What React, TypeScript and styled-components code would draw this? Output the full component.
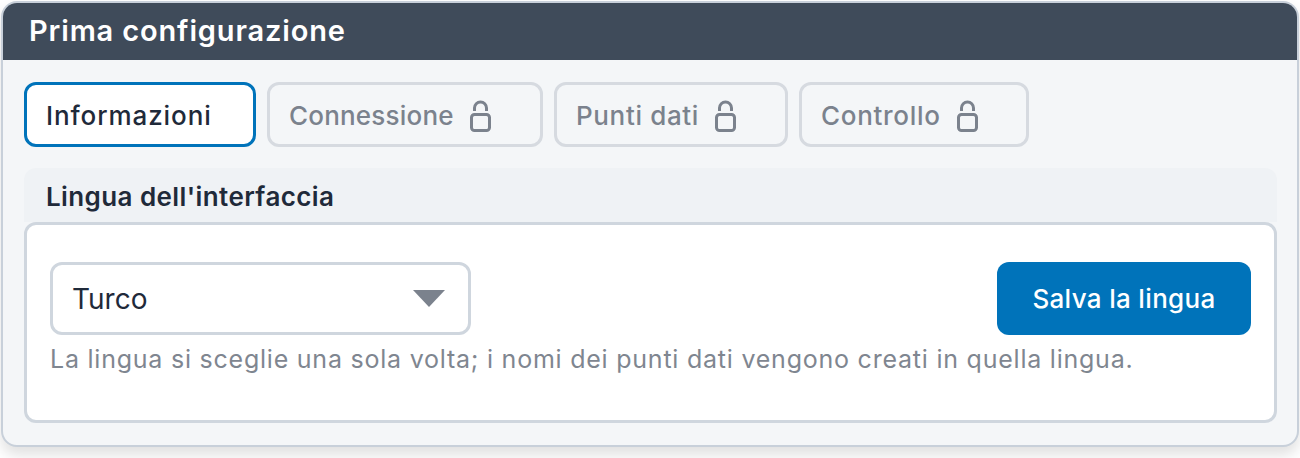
import React from "react";
import styled, { createGlobalStyle } from "styled-components";

const Global = createGlobalStyle`
  html, body { margin: 0; padding: 0; background: #ffffff; }
  body { font-family: "Inter", "Noto Sans", sans-serif; }
  * { box-sizing: border-box; }
`;

const Page = styled.div`
  width: 1300px;
  height: 458px;
  padding: 1px 1px 0 1px;
  overflow: hidden;
`;

const Card = styled.div`
  width: 1298px;
  height: 446px;
  border: 2px solid #c8d0da;
  border-radius: 16px;
  background: #f4f6f8;
  box-shadow: 0 8px 14px rgba(0, 0, 0, 0.12);
  overflow: hidden;
`;

const Header = styled.div`
  height: 57px;
  background: #3f4b5a;
  color: #ffffff;
  display: flex;
  align-items: center;
  padding: 0 26px 2px 26px;
  font-size: 29px;
  font-weight: 600;
  letter-spacing: 0.85px;
`;

const Body = styled.div`
  padding: 22px 20px 0 21px;
`;

const Tabs = styled.div`
  display: flex;
  gap: 11px;
`;

const Tab = styled.div<{ $active?: boolean; $width: number; $tracking: number }>`
  width: ${(p) => p.$width}px;
  height: 65px;
  display: flex;
  align-items: center;
  gap: 16px;
  padding: 2px 19px 0;
  border-radius: 12px;
  border: 3px solid ${(p) => (p.$active ? "#0073ba" : "#d6dae0")};
  background: ${(p) => (p.$active ? "#ffffff" : "#f4f6f8")};
  color: ${(p) => (p.$active ? "#1f2a3a" : "#7b828d")};
  font-size: 26px;
  font-weight: 500;
  letter-spacing: ${(p) => p.$tracking}px;
`;

const LockIcon = styled.svg`
  width: 21px;
  height: 32px;
  flex: none;
  fill: none;
  stroke: #7b828d;
  stroke-width: 3;
`;

const SectionHead = styled.div`
  margin-top: 21px;
  height: 54px;
  background: #eff2f5;
  border-radius: 12px 12px 0 0;
  color: #1f2a3a;
  font-size: 26px;
  font-weight: 600;
  letter-spacing: 0.4px;
  padding: 2px 22px 0;
  display: flex;
  align-items: center;
`;

const SectionBody = styled.div`
  height: 201px;
  background: #ffffff;
  border: 3px solid #cfd6de;
  border-radius: 12px;
  padding: 37px 23px 0 23px;
`;

const Row = styled.div`
  display: flex;
  justify-content: space-between;
`;

const Select = styled.div`
  width: 421px;
  height: 73px;
  border: 3px solid #cfd6de;
  border-radius: 12px;
  background: #fff;
  display: flex;
  align-items: center;
  justify-content: space-between;
  padding: 0 23px 0 19px;
  color: #1f2a3a;
  font-size: 28px;
`;

const Caret = styled.svg`
  width: 32px;
  height: 17px;
  fill: #7b828d;
`;

const Button = styled.div`
  width: 254px;
  height: 73px;
  border-radius: 12px;
  background: #0073ba;
  color: #fff;
  display: flex;
  align-items: center;
  justify-content: center;
  font-size: 26px;
  font-weight: 500;
  letter-spacing: 0.33px;
`;

const Hint = styled.div`
  margin-top: 7px;
  color: #7f8690;
  font-size: 25px;
  line-height: 34px;
  letter-spacing: 0.77px;
`;

const Lock = () => (
  <LockIcon viewBox="0 0 21 32">
    <rect x="1.5" y="14.5" width="18" height="16" rx="3" />
    <path d="M4.5 11V8a6 6 0 0 1 12 0v3" />
  </LockIcon>
);

export default function App() {
  return (
    <Page>
      <Global />
      <Card>
        <Header>Prima configurazione</Header>
        <Body>
          <Tabs>
            <Tab $active $width={232} $tracking={0.9}>Informazioni</Tab>
            <Tab $width={276} $tracking={0.2}>Connessione <Lock /></Tab>
            <Tab $width={234} $tracking={0.65}>Punti dati <Lock /></Tab>
            <Tab $width={230} $tracking={0.7}>Controllo <Lock /></Tab>
          </Tabs>
          <SectionHead>Lingua dell'interfaccia</SectionHead>
          <SectionBody>
            <Row>
              <Select>
                Turco
                <Caret viewBox="0 0 32 17"><path d="M0 0h32L16 17z" /></Caret>
              </Select>
              <Button>Salva la lingua</Button>
            </Row>
            <Hint>La lingua si sceglie una sola volta; i nomi dei punti dati vengono creati in quella lingua.</Hint>
          </SectionBody>
        </Body>
      </Card>
    </Page>
  );
}
